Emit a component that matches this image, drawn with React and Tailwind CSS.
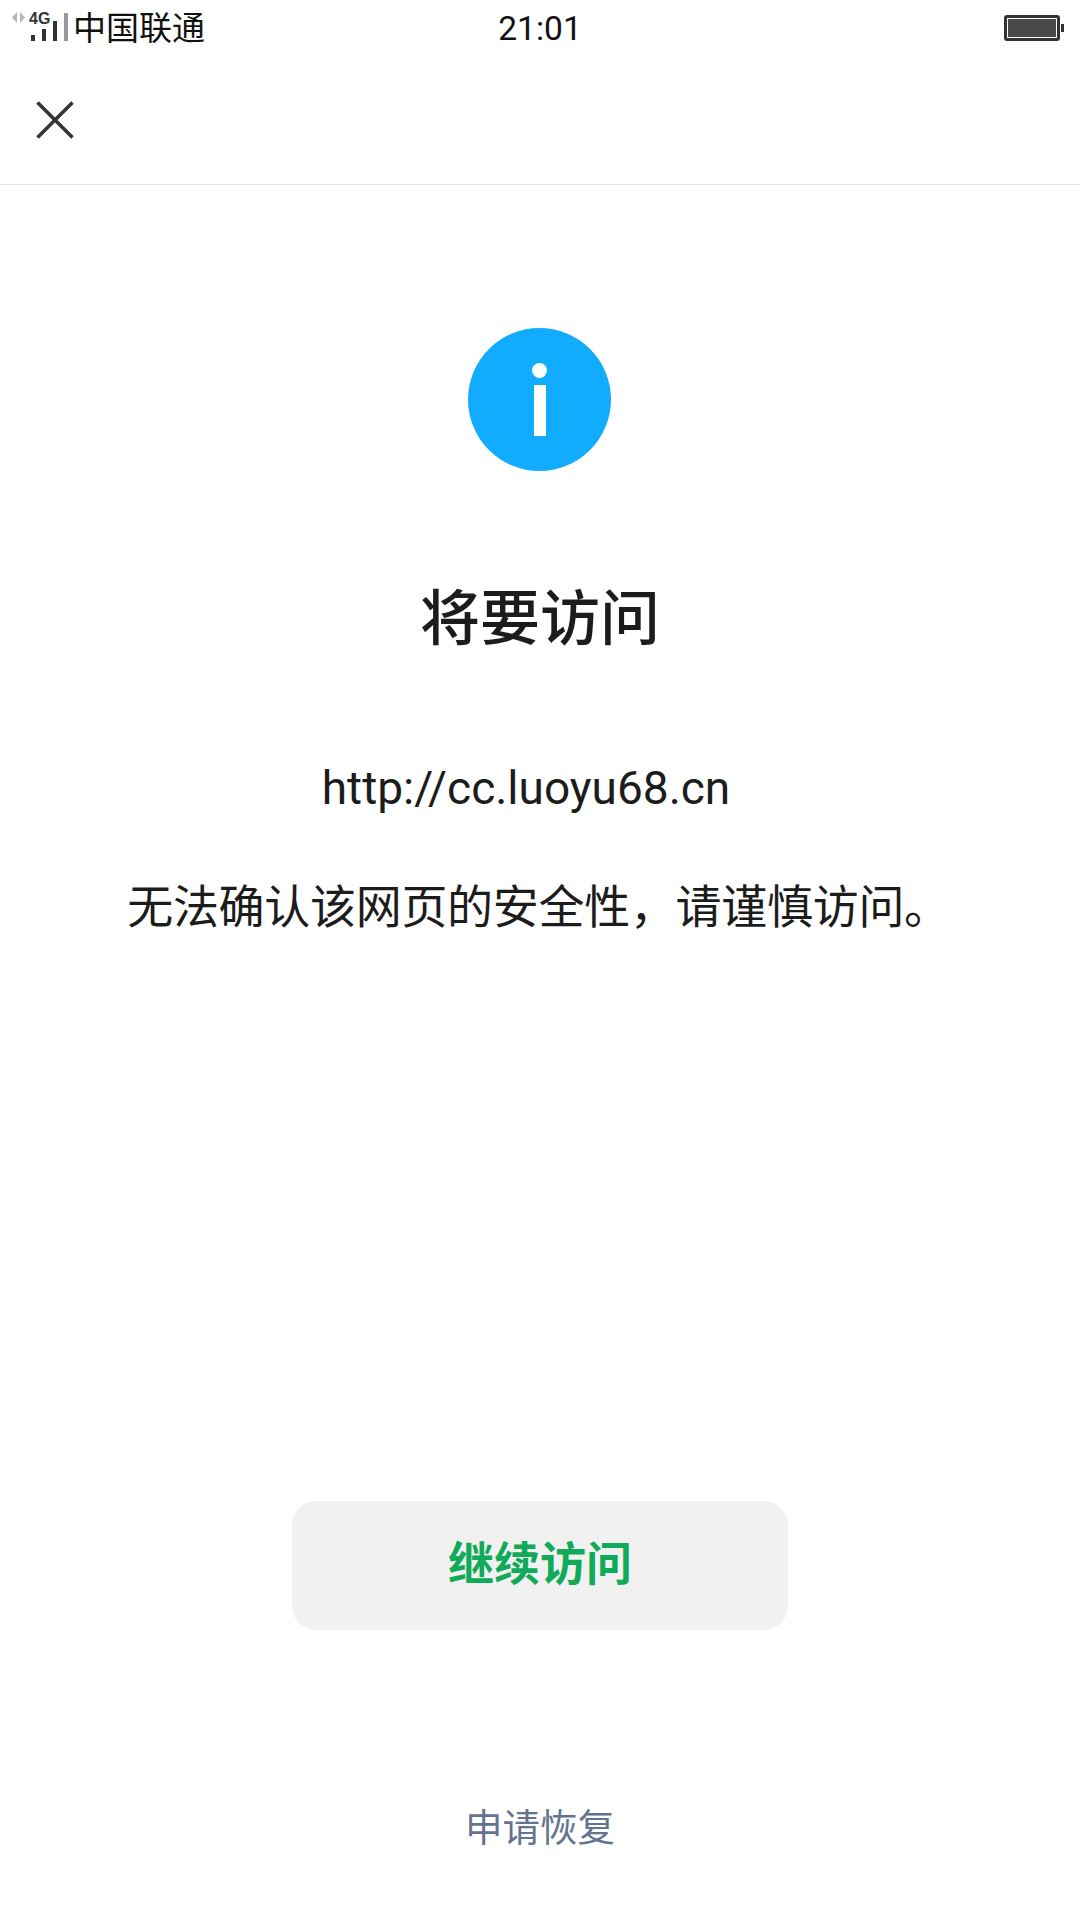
import React from 'react';

const cjk = "font-['Roboto','Noto_Sans_CJK_SC',sans-serif]";

const StatusBar = () => (
  <div className={`flex items-center justify-between h-[56px] pr-[16px] text-[#111] ${cjk}`}>
    <div className="flex items-center w-[300px]">
      <svg width="73" height="56" viewBox="0 0 73 56" className="shrink-0">
        <path d="M17 12v11l-5-5.500zM20 12v11l5-5.500z" fill="#b5b5b5" />
        <text x="29" y="24" fontSize="16" fontWeight="700" fontFamily="Liberation Sans, sans-serif" fill="#333">4G</text>
        <rect x="31" y="35" width="4" height="6" fill="#333" />
        <rect x="42" y="29" width="4" height="12" fill="#333" />
        <rect x="53" y="21" width="4" height="20" fill="#333" />
        <rect x="64" y="13" width="4" height="28" fill="#999" />
      </svg>
      <span className="text-[33px] leading-none">中国联通</span>
    </div>
    <span className="text-[33.5px] leading-none ml-[16px] mt-[2px]">21:01</span>
    <div className="flex items-center justify-end w-[300px]">
      <div className="w-[56px] h-[26px] rounded-[3px] border-[3px] border-[#333] p-[1px]">
        <div className="w-full h-full bg-[#4a4a4a]" />
      </div>
      <div className="w-[3px] h-[8px] bg-[#333] ml-[1px]" />
    </div>
  </div>
);

export default function App() {
  return (
    <div className={`w-[1080px] h-[1920px] bg-white flex flex-col items-center overflow-hidden ${cjk}`}>
      <div className="w-full">
        <StatusBar />
        <div className="h-[129px] flex items-center pl-[36px] border-b border-[#e6e6e6]">
          <svg width="38" height="38" viewBox="0 0 38 38">
            <path d="M1.500 1.500l35 35M36.500 1.500l-35 35" stroke="#333" strokeWidth="3.500" fill="none" />
          </svg>
        </div>
      </div>

      <div className="mt-[143px] mr-px w-[143px] h-[143px] rounded-full bg-[#12acff] flex flex-col items-center">
        <div className="mt-[35px] w-[15px] h-[15px] rounded-full bg-white" />
        <div className="mt-[7px] w-[12px] h-[51px] bg-white" />
      </div>

      <h1 className="mt-[114px] text-[60px] leading-[70px] font-medium text-[#1c1c1c]">将要访问</h1>

      <p className="mt-[105px] mr-[28px] text-[46px] leading-[56px] text-[#1c1c1c]">http://cc.luoyu68.cn</p>

      <p className="mt-[63px] mr-[3px] text-[46px] tracking-[-0.3px] leading-[56px] text-[#1c1c1c]">无法确认该网页的安全性，请谨慎访问。</p>

      <button className="mt-[566px] w-[496px] h-[129px] pb-[2px] rounded-[24px] bg-[#f1f1f1] flex items-center justify-center text-[46px] font-bold text-[#10aa58]">
        继续访问
      </button>

      <p className="mt-[173px] text-[37.5px] leading-[50px] text-[#64748f]">申请恢复</p>
    </div>
  );
}
